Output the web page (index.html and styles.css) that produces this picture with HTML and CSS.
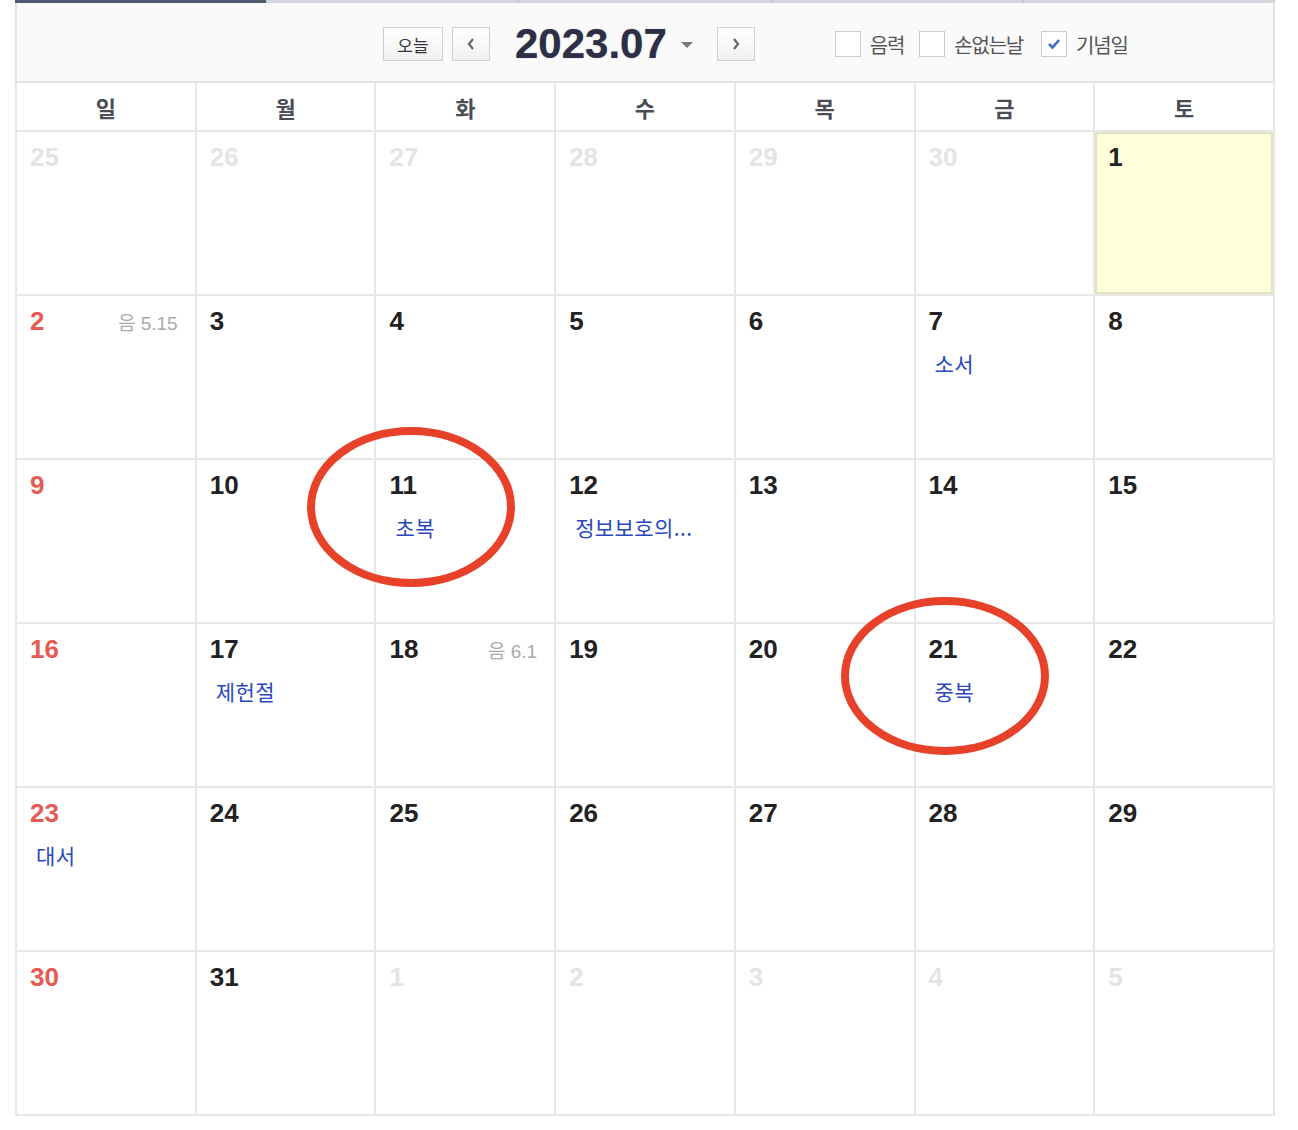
FILE: index.html
```html
<!DOCTYPE html>
<html>
    <head>
        <title>Calendar</title>
        <link rel="stylesheet" href="styles.css">
    </head>
    <body>
        <div class="calendar">
            <div class="tabs">
                <div class="tab active"></div>
                <div class="tab"></div>
                <div class="tab"></div>
                <div class="tab"></div>
                <div class="tab"></div>
            </div>

            <div class="toolbar">
                <button class="btn today">오늘</button>
                <button class="btn arrow">
                    <svg width="10" height="14" viewBox="0 0 10 14"><path d="M7 2 L3 7 L7 12" fill="none" stroke="#666" stroke-width="2.2"/></svg>
                </button>
                <div class="month">2023.07</div>
                <span class="caret"></span>
                <button class="btn arrow next">
                    <svg width="10" height="14" viewBox="0 0 10 14"><path d="M3 2 L7 7 L3 12" fill="none" stroke="#666" stroke-width="2.2"/></svg>
                </button>

                <div class="options">
                    <label class="opt"><span class="box"></span>음력</label>
                    <label class="opt"><span class="box"></span>손없는날</label>
                    <label class="opt"><span class="box checked">
                        <svg width="16" height="14" viewBox="0 0 16 14"><path d="M3 7 L6.5 10.5 L13 3" fill="none" stroke="#3b6fc4" stroke-width="2.6"/></svg>
                    </span>기념일</label>
                </div>
            </div>

            <div class="grid">
                <div class="head">일</div>
                <div class="head">월</div>
                <div class="head">화</div>
                <div class="head">수</div>
                <div class="head">목</div>
                <div class="head">금</div>
                <div class="head">토</div>

                <!-- week 1 -->
                <div class="day other"><div class="top"><span class="num">25</span></div></div>
                <div class="day other"><div class="top"><span class="num">26</span></div></div>
                <div class="day other"><div class="top"><span class="num">27</span></div></div>
                <div class="day other"><div class="top"><span class="num">28</span></div></div>
                <div class="day other"><div class="top"><span class="num">29</span></div></div>
                <div class="day other"><div class="top"><span class="num">30</span></div></div>
                <div class="day today-cell"><div class="top"><span class="num">1</span></div></div>

                <!-- week 2 -->
                <div class="day sun"><div class="top"><span class="num">2</span><span class="lunar">음 5.15</span></div></div>
                <div class="day"><div class="top"><span class="num">3</span></div></div>
                <div class="day"><div class="top"><span class="num">4</span></div></div>
                <div class="day"><div class="top"><span class="num">5</span></div></div>
                <div class="day"><div class="top"><span class="num">6</span></div></div>
                <div class="day"><div class="top"><span class="num">7</span></div><div class="event">소서</div></div>
                <div class="day"><div class="top"><span class="num">8</span></div></div>

                <!-- week 3 -->
                <div class="day sun"><div class="top"><span class="num">9</span></div></div>
                <div class="day"><div class="top"><span class="num">10</span></div></div>
                <div class="day"><div class="top"><span class="num">11</span></div><div class="event">초복</div></div>
                <div class="day"><div class="top"><span class="num">12</span></div><div class="event">정보보호의...</div></div>
                <div class="day"><div class="top"><span class="num">13</span></div></div>
                <div class="day"><div class="top"><span class="num">14</span></div></div>
                <div class="day"><div class="top"><span class="num">15</span></div></div>

                <!-- week 4 -->
                <div class="day sun"><div class="top"><span class="num">16</span></div></div>
                <div class="day"><div class="top"><span class="num">17</span></div><div class="event">제헌절</div></div>
                <div class="day"><div class="top"><span class="num">18</span><span class="lunar">음 6.1</span></div></div>
                <div class="day"><div class="top"><span class="num">19</span></div></div>
                <div class="day"><div class="top"><span class="num">20</span></div></div>
                <div class="day"><div class="top"><span class="num">21</span></div><div class="event">중복</div></div>
                <div class="day"><div class="top"><span class="num">22</span></div></div>

                <!-- week 5 -->
                <div class="day sun"><div class="top"><span class="num">23</span></div><div class="event">대서</div></div>
                <div class="day"><div class="top"><span class="num">24</span></div></div>
                <div class="day"><div class="top"><span class="num">25</span></div></div>
                <div class="day"><div class="top"><span class="num">26</span></div></div>
                <div class="day"><div class="top"><span class="num">27</span></div></div>
                <div class="day"><div class="top"><span class="num">28</span></div></div>
                <div class="day"><div class="top"><span class="num">29</span></div></div>

                <!-- week 6 -->
                <div class="day sun"><div class="top"><span class="num">30</span></div></div>
                <div class="day"><div class="top"><span class="num">31</span></div></div>
                <div class="day other"><div class="top"><span class="num">1</span></div></div>
                <div class="day other"><div class="top"><span class="num">2</span></div></div>
                <div class="day other"><div class="top"><span class="num">3</span></div></div>
                <div class="day other"><div class="top"><span class="num">4</span></div></div>
                <div class="day other"><div class="top"><span class="num">5</span></div></div>
            </div>
        </div>

        <!-- hand-drawn marks on top of the screenshot -->
        <svg class="marks" width="1298" height="1130" viewBox="0 0 1298 1130">
            <ellipse cx="411" cy="507" rx="100" ry="76" fill="none" stroke="#e8412a" stroke-width="8"/>
            <ellipse cx="945" cy="676" rx="100" ry="75" fill="none" stroke="#e8412a" stroke-width="8"/>
        </svg>
    </body>
</html>
```

FILE: styles.css
```css
* {
    margin: 0;
    padding: 0;
    box-sizing: border-box;
}

body {
    position: relative;
    width: 1298px;
    height: 1130px;
    background: #fff;
    font-family: 'Liberation Sans', 'Noto Sans CJK KR', sans-serif;
}

.calendar {
    margin-left: 15px;
    width: 1260px;
}

.tabs {
    display: flex;
    height: 3px;
}
.tab {
    flex: 1;
    background: #d3d7dd;
    border-left: 1px solid #bfc4cb;
}
.tab.active {
    background: #4f5c6f;
    border-left: none;
}

.toolbar {
    height: 80px;
    display: flex;
    align-items: center;
    padding: 4px 0 0 366px;
    background: #fafafa;
    border: 2px solid #e4e4e4;
    border-top: none;
}

.btn {
    height: 34px;
    display: flex;
    align-items: center;
    justify-content: center;
    background: linear-gradient(#ffffff, #f1f1f1);
    border: 1px solid #cfcfcf;
    color: #333;
    font-family: 'Noto Sans CJK KR', sans-serif;
    font-size: 17px;
}
.btn.today {
    width: 60px;
}
.btn.arrow {
    width: 38px;
    margin-left: 9px;
}
.btn.next {
    margin-left: 24px;
}

.month {
    margin-left: 25px;
    font-size: 42px;
    font-weight: bold;
    color: #2c2f46;
    text-shadow: 0 0 1px rgba(44, 47, 70, 0.5);
}
.caret {
    margin-left: 14px;
    margin-top: 2px;
    width: 0;
    height: 0;
    border-left: 6px solid transparent;
    border-right: 6px solid transparent;
    border-top: 6px solid #777;
}

.options {
    display: flex;
    align-items: center;
    margin-left: 80px;
}
.opt {
    display: flex;
    align-items: center;
    margin-right: 15px;
    font-family: 'Noto Sans CJK KR', sans-serif;
    font-size: 20px;
    color: #555;
    letter-spacing: -1.2px;
}
.opt:nth-child(2) {
    margin-right: 18px;
}
.box {
    width: 26px;
    height: 26px;
    margin-right: 9px;
    display: flex;
    align-items: center;
    justify-content: center;
    background: #fff;
    border: 1px solid #cdcdcd;
}

.grid {
    display: grid;
    grid-template-columns: repeat(7, 1fr);
    grid-template-rows: 47px repeat(6, 162px);
    gap: 2px;
    padding: 0 2px 2px;
    background: #e8e8e8;
}

.head {
    display: flex;
    align-items: center;
    justify-content: center;
    background: #fff;
    font-family: 'Noto Sans CJK KR', sans-serif;
    font-size: 22px;
    font-weight: bold;
    color: #4c4c56;
}

.day {
    background: #fff;
    padding: 10px 17px 0 13px;
}
.top {
    display: flex;
    justify-content: space-between;
    align-items: center;
    height: 30px;
}
.num {
    font-size: 26px;
    font-weight: bold;
    color: #222;
}
.lunar {
    font-size: 19px;
    color: #aaa;
}
.event {
    margin: 13px 0 0 6px;
    font-family: 'Noto Sans CJK KR', sans-serif;
    font-size: 21px;
    line-height: 28px;
    letter-spacing: 0.4px;
    color: #2a47bd;
}

.day.sun .num {
    color: #e85a50;
}
.day.other .num {
    color: #e4e4e4;
}
.day.today-cell {
    background: #ffffdc;
    outline: 2px solid #e2e2c4;
    outline-offset: -2px;
}

.marks {
    position: absolute;
    top: 0;
    left: 0;
    pointer-events: none;
}
```
